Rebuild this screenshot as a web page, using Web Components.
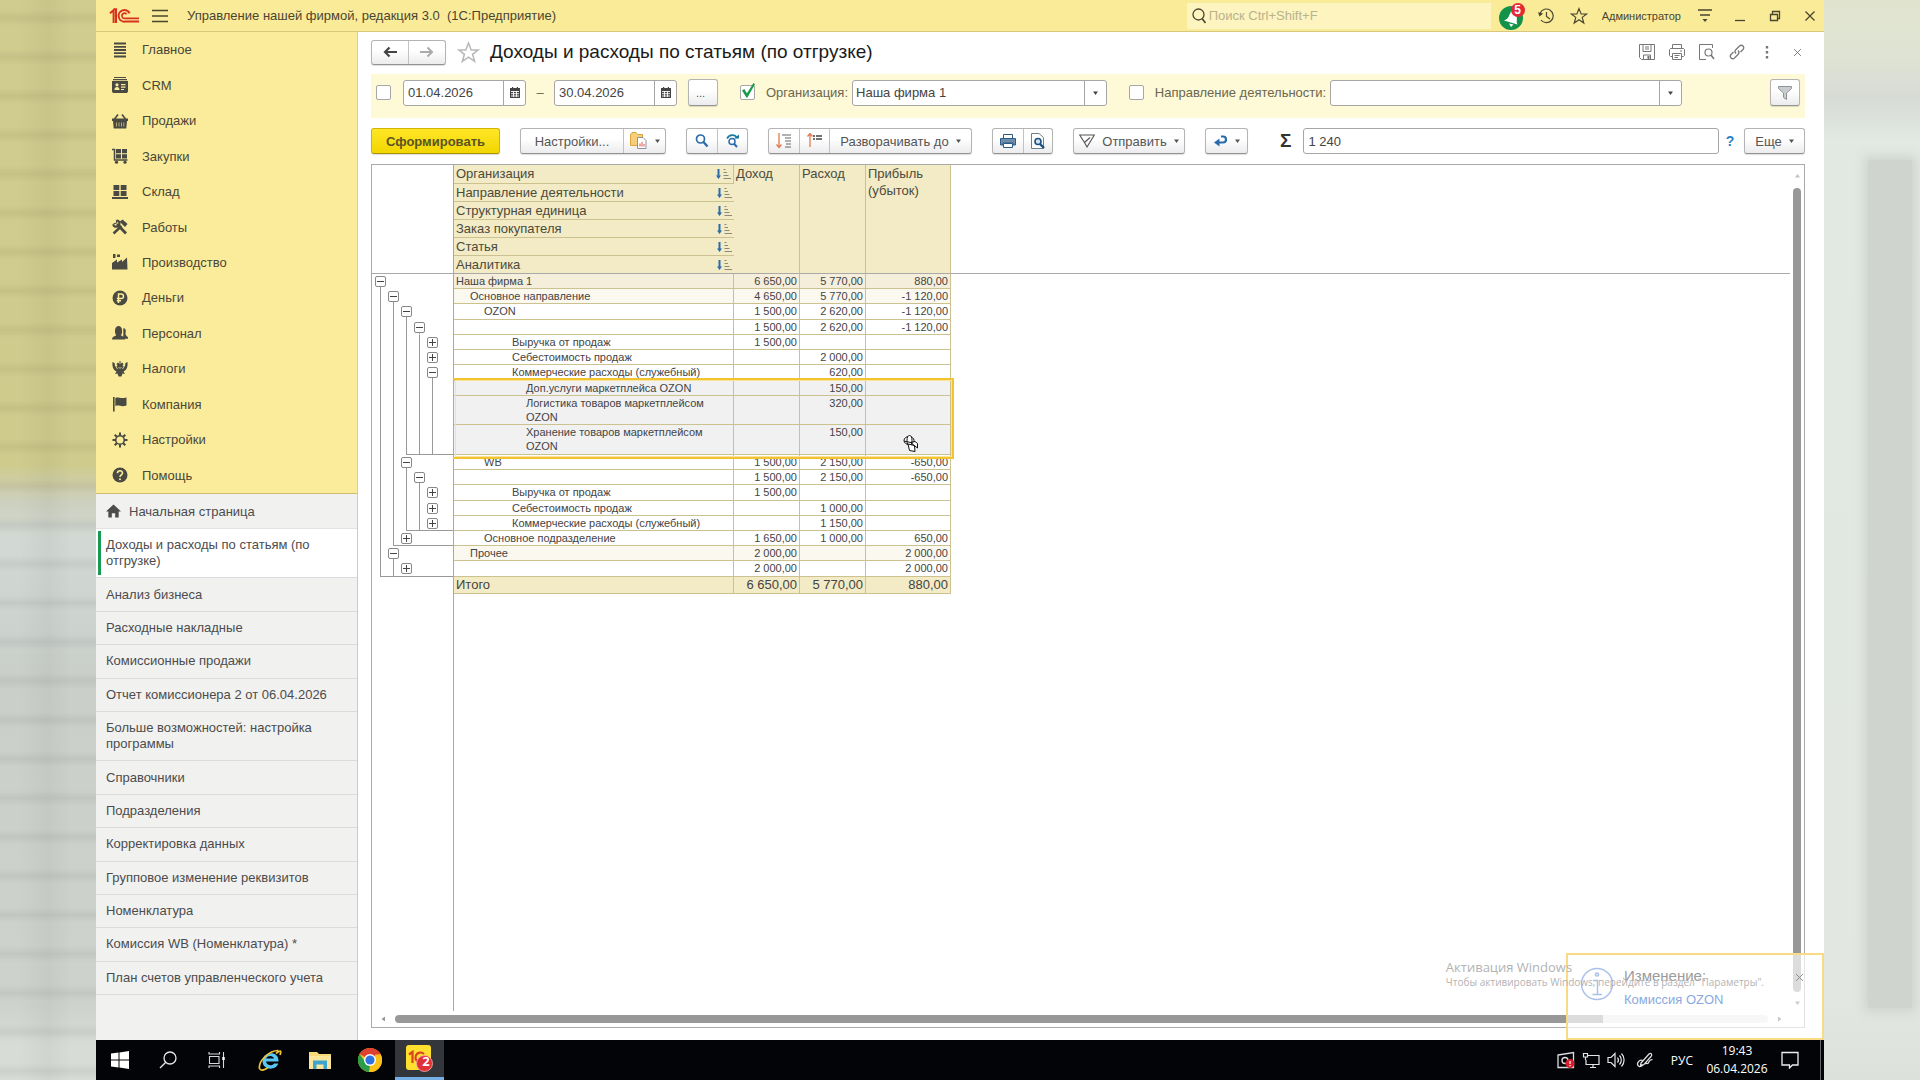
<!DOCTYPE html>
<html lang="ru">
<head>
<meta charset="utf-8">
<title>Доходы и расходы по статьям (по отгрузке)</title>
<style>
html,body{margin:0;height:100%}
body{font-family:"Liberation Sans",Arial,sans-serif;font-size:13px;color:#444;background:#dfe4de}
</style>
</head>
<body>
<ufm-desktop></ufm-desktop>
<script>
const define = (name, html, setup) => {
  const tpl = document.createElement('template');
  customElements.define(name, class extends HTMLElement {
    constructor() {
      super();
      this.attachShadow({mode: 'open'});
      tpl.innerHTML = tpl.innerHTML || html;
    }
    connectedCallback() {
      if (this.ready) return;
      this.ready = true;
      this.shadowRoot.append(document.importNode(tpl.content, true));
      if (setup) setup(this, this.shadowRoot);
    }
  });
};

/* ---------- icons: [viewBox, markup] ---------- */
const S = 'fill="none" stroke="currentColor"';
const ICONS = {
  logo: ['0 0 30 15', `<g fill="none" stroke="#d8321f" stroke-width="2"><path d="M1 5.2 4.6 2.2V15M7 15V1.2H4.4"/><path d="M20.6 5.2A5.8 5.8 0 1 0 16 13.6H30"/><path d="M17.6 6.2A2.6 2.6 0 1 0 16 10.4H30" stroke-width="1.6"/></g>`],
  burger: ['0 0 16 14', `<path ${S} d="M0 1.5H16M0 7H16M0 12.5H16" stroke-width="1.4"/>`],
  lens: ['0 0 16 16', `<circle cx="8.5" cy="6.5" r="5.500" ${S} stroke-width="1.3"/><path ${S} d="M12 10.500 15.500 15" stroke-width="1.6"/>`],
  bell: ['0 0 30 28', `<circle cx="13" cy="16" r="12" fill="#13924a"/><path d="M6 18.5C11 17 11 13 13.5 8.5L18.5 14C19.5 18 18 20 19.5 22.5ZM11 21.5 15.5 22.5 13 25Z" fill="#fff"/><circle cx="20" cy="8" r="7" fill="#e32a33"/>`],
  history: ['0 0 18 16', `<g ${S} stroke-width="1.2"><path d="M3.2 5A6.8 6.8 0 1 1 4 12M9.5 4V8.5L13 11"/></g><path d="M1 4.2 6.2 5.5 2.5 8.6Z" fill="currentColor"/>`],
  star: ['0 0 18 18', `<path ${S} stroke-width="1.2" d="M9 1.6 11.1 7H16.6L12.2 10.4 13.8 16 9 12.7 4.2 16 5.8 10.4 1.4 7H6.9Z"/>`],
  svc: ['0 0 14 16', `<path ${S} d="M0 2H14M2 7H12" stroke-width="1.5"/><path d="M4.5 11H9.5L7 14Z" fill="currentColor"/>`],
  min: ['0 0 12 12', `<path ${S} d="M1 10.5H11" stroke-width="1.3"/>`],
  restore: ['0 0 12 12', `<path ${S} d="M1.5 4.5H8.5V10.5H1.5ZM3.5 4.5V1.5H10.5V8.5H8.5" stroke-width="1.3"/>`],
  close: ['0 0 12 12', `<path ${S} d="M1.5 1.5 10.5 10.5M10.5 1.5 1.5 10.5" stroke-width="1.3"/>`],
  main: ['0 0 16 16', `<path ${S} d="M2 1.5H14M2 4.8H14M2 8H14M2 11.2H14M2 14.5H14" stroke-width="1.8"/>`],
  crm: ['0 0 16 16', `<path d="M2 0H14V1H2ZM1 2H15V3.2H1ZM0 4H16V14.5L15 16H1L0 14.5Z" fill="currentColor"/><g fill="#faec9b"><circle cx="5" cy="7.8" r="1.6"/><path d="M2.5 13C2.5 10.8 3.5 10 5 10S7.500 10.800 7.500 13ZM9 7H13.500V8.200H9ZM9 9.500H13.500V10.700H9ZM9 12H12V13H9Z"/></g>`],
  sales: ['0 0 16 16', `<path d="M0 5.500H16V8H15L14.300 15.500H1.700L1 8H0Z" fill="currentColor"/><path ${S} d="M2.500 6 6 1.500M13.500 6 10 1.500" stroke-width="1.600"/><path d="M4.500 9.500V13.500M7 9.500V13.500M9.500 9.500V13.500M11.800 9.500V13.500" stroke="#faec9b" stroke-width=".6" fill="none"/>`],
  buy: ['0 0 16 16', `<path ${S} d="M0 1.500H2.500V12H15.500" stroke-width="1.5"/><path d="M4 1H9V5.200H4ZM10 1H15V5.200H10ZM4 6.200H9V10.400H4ZM10 6.200H15V10.400H10Z" fill="currentColor"/><circle cx="4.500" cy="14.200" r="1.600" fill="currentColor"/><circle cx="13" cy="14.200" r="1.600" fill="currentColor"/>`],
  stock: ['0 0 16 16', `<path d="M1.500 1H7.300V6H1.500ZM8.700 1H14.500V6H8.700ZM1.500 7H7.300V12H1.500ZM8.700 7H14.500V12H8.700ZM0 13H16V15H0Z" fill="currentColor"/>`],
  works: ['0 0 16 16', `<path ${S} d="M5 5 14 14.500" stroke-width="2.800"/><path ${S} d="M4.300 0.800 4.800 4 1.500 4.800" stroke-width="1"/><path ${S} d="M5 1.500A3.200 3.200 0 1 1 1.200 5.200" stroke-width="2"/><path ${S} d="M1.500 14.500 9.500 7" stroke-width="2.400"/><path d="M7.500 2.500 11 0.500 12 2 13.500 3 15.500 5 13 8Z" fill="currentColor"/>`],
  prod: ['0 0 16 16', `<path d="M0 15.500V9L5 5.500V8.500L10 5.500V8L15 3.500 15.500 15.500ZM1 0H3.500V4H1ZM5 0.500H8V3H5Z" fill="currentColor"/>`],
  money: ['0 0 16 16', `<circle cx="8" cy="8" r="7.500" fill="currentColor"/><path d="M6.500 13V4H9.200A2.200 2.200 0 0 1 9.200 8.600H4.800M4.800 10.700H9" fill="none" stroke="#faec9b" stroke-width="1.500"/>`],
  staff: ['0 0 17 16', `<path d="M12 3C14.500 3 15 5 14.500 7.500 14 9 14.500 10.500 17 12.500V14H12Z" fill="currentColor"/><path d="M0 15C0 11.800 3.500 11.500 4.500 10.500 2.500 8 2.500 0.500 7 0.500S11.500 8 9.500 10.500C10.500 11.500 14 11.800 14 15Z" fill="currentColor"/>`],
  tax: ['0 0 16 16', `<path d="M8 3.200 6 1.500 4.500 3 5.500 5 3.500 5.500 2.500 2 0.500 1C0 5 1 9 4.500 10.500L3 13 5.500 12.500 6.500 15.500H9.500L10.500 12.500 13 13 11.500 10.500C15 9 16 5 15.500 1L13.500 2 12.500 5.500 10.500 5 11.500 3 10 1.500Z" fill="currentColor"/><path d="M8 0V3" stroke="currentColor"/><path d="M3 4 5.500 8M13 4 10.500 8M6.500 6 8 7.500 9.500 6" fill="none" stroke="#faec9b" stroke-width=".8"/>`],
  flag: ['0 0 16 16', `<path d="M1 1H2.600V15.500H1ZM3.300 2C6 0.500 8 3 14.500 1.500V9.500C9 11.500 7.500 8.500 3.300 10Z" fill="currentColor"/>`],
  gear: ['0 0 16 16', `<circle cx="8" cy="8" r="4.300" ${S} stroke-width="1.600"/><path ${S} stroke-width="2" d="M8 0.500V3.500M8 12.500V15.500M0.500 8H3.500M12.500 8H15.500M2.700 2.700 4.800 4.800M11.200 11.200 13.300 13.300M13.300 2.700 11.200 4.800M4.800 11.200 2.700 13.300"/>`],
  help: ['0 0 16 16', `<circle cx="8" cy="8" r="7.500" fill="currentColor"/><path d="M5.500 6.200C5.500 3 10.500 3 10.500 6 10.500 7.800 8 8 8 10" fill="none" stroke="#faec9b" stroke-width="1.600"/><circle cx="8" cy="12.200" r="1" fill="#faec9b"/>`],
  home: ['0 0 16 14', `<path d="M8 0 16 7.500H13.500V14H9.800V9.500H6.200V14H2.500V7.500H0Z" fill="currentColor"/>`],
  left: ['0 0 16 12', `<path ${S} d="M15 6H3M7.500 1.500 3 6 7.500 10.500" stroke-width="2.200"/>`],
  right: ['0 0 16 12', `<path ${S} d="M1 6H13M8.500 1.500 13 6 8.500 10.500" stroke-width="2"/>`],
  save: ['0 0 16 16', `<g ${S}><path d="M1 0.500H15.500V15.500H2.500L0.500 13.500V0.500ZM4 0.500V7.500H12V0.500M4.500 15.500V11H11.500V15.500M6 3H10M6 5H10"/></g><path d="M8.500 12H10.500V15H8.500Z" fill="currentColor"/>`],
  print: ['0 0 16 16', `<path ${S} d="M3.500 4V0.500H12.500V4M3 12.500H1.500L0.500 11.500V5.500L1.500 4.500H14.500L15.500 5.500V11.500L14.500 12.500H13M3.500 9.500H12.500V15.500H3.500ZM5.500 11.500H10.500M5.500 13.500H9M11 7H13"/>`],
  preview: ['0 0 16 16', `<path ${S} d="M5 15.500H0.500V0.500H13.500V4M5 15.500H7"/><circle cx="9.500" cy="8.500" r="3.500" ${S} stroke-width="1.200"/><path ${S} d="M12 11 15 15" stroke-width="1.600"/>`],
  link: ['0 0 16 16', `<path ${S} stroke-width="1.300" d="M7 9.500C5.500 8 6 6.500 7 5.500L10.500 2C13 0 16 3 14 5.500L11.500 8M9 6.500C10.500 8 10 9.500 9 10.500L5.500 14C3 16 0 13 2 10.500L4.500 8"/>`],
  dots: ['0 0 4 14', `<path d="M0.800 1H3.200V3.500H0.800ZM0.800 6H3.200V8.500H0.800ZM0.800 11H3.200V13.500H0.800Z" fill="currentColor"/>`],
  cal: ['0 0 10 11', `<path d="M0 1H10V11H0ZM2 0H3.200V2H2ZM6.800 0H8V2H6.800Z" fill="currentColor"/><path d="M1 4.500H9M1 6.700H9M1 9H9M3.500 4V10M6.500 4V10" stroke="#fff" stroke-width=".9"/>`],
  caret: ['0 0 5 4', `<path d="M0 0.500H5L2.500 4Z" fill="currentColor"/>`],
  funnel: ['0 0 14 14', `<path d="M0.500 0.500H13.500V2.500L8.500 7V13.500L5.500 11.500V7L0.500 2.500Z" fill="#c9cdd0" stroke="#8d9499"/>`],
  variants: ['0 0 18 18', `<path d="M0.500 13.500V2.500L2 0.500H6L7.500 2.500H12.500V13.500Z" fill="#f6cf7c" stroke="#dda33a"/><path d="M7.500 5.500H13L16 8.500V16.500H7.500Z" fill="#fff" stroke="#8a93a0"/><path d="M10 14.500V11.500M12 14.500V10M14 14.500V12" stroke="#d9534f"/>`],
  find: ['0 0 14 14', `<circle cx="5.500" cy="5" r="4" fill="none" stroke="#2a6cab" stroke-width="1.700"/><path d="M8.500 8 12.500 12.500" stroke="#2a6cab" stroke-width="2.300"/>`],
  findnext: ['0 0 14 14', `<circle cx="6" cy="7.500" r="3" fill="none" stroke="#2a6cab" stroke-width="1.500"/><path d="M8 9.800 11 13" stroke="#2a6cab" stroke-width="2"/><path d="M1 4.500C3.500 0 9 0 11 4" fill="none" stroke="#1a7aa0" stroke-width="1.700"/><path d="M8 4.500H13V0.500Z" fill="#1a7aa0"/>`],
  expand: ['0 0 16 16', `<path d="M3 0V14M0.500 11.500 3 14.500 5.500 11.500" fill="none" stroke="#e27a50" stroke-width="1.300"/><path d="M6 2H15M9 5H15M9 8H15M10 11H15M9 14H15" stroke="#666" stroke-width="1.200"/>`],
  collapse: ['0 0 16 16', `<path d="M3 14V1M0.500 3.500 3 0.500 5.500 3.500" fill="none" stroke="#e27a50" stroke-width="1.300"/><path d="M6 3H8M9 3H15M6 6H8M9 6H15" stroke="#444" stroke-width="1.500"/>`],
  printb: ['0 0 16 14', `<path d="M3.500 4V0.500H12.500V4" fill="#fff" stroke="#2b5a86"/><path d="M0.500 4.500H15.500V11H13V9H3V11H0.500Z" fill="#6f8ca8" stroke="#2b5f8f"/><path d="M3.500 9.500H12.500V13.500H3.500Z" fill="#fff" stroke="#2b5a86"/>`],
  previewb: ['0 0 14 16', `<path d="M0.500 0.500H8L12.500 4.500V15.500H0.500Z" fill="#fff" stroke="#6f7f8f"/><circle cx="7" cy="8.500" r="3" fill="#cfe4f5" stroke="#1c4f82" stroke-width="1.600"/><path d="M9 11 13 15" stroke="#1c4f82" stroke-width="2.400"/>`],
  send: ['0 0 16 14', `<path ${S} stroke-width="1.100" d="M0.700 1H15.300L8 13 5.500 8.500ZM5.500 8.500 11 3.500M2.500 4 5.500 8.500"/>`],
  undo: ['0 0 14 14', `<path d="M4 8.500H9A3 3 0 0 0 9 2.500H7" fill="none" stroke="#2a6cab" stroke-width="2.200"/><path d="M0 8.500 5.500 4.500V12.500Z" fill="#2a6cab"/>`],
  sort: ['0 0 16 12', `<path d="M2.500 1H4.500V7.500H6L3.500 11 1 7.500H2.500Z" fill="#2a6cab"/><path d="M8.500 1.500H10.500M8.500 4.500H12M8.500 7.500H13.500M8.500 10.500H16" stroke="#8c8a76" stroke-width="1.200"/>`],
  cursor: ['0 0 18 18', `<g fill="#fff" stroke="#111"><ellipse cx="6" cy="5.500" rx="5" ry="4"/><ellipse cx="6.500" cy="5.500" rx="2.500" ry="5"/><path d="M1 6 10 8M7.500 7.500 12 6.500 14.500 8.500 14.500 13 12 11ZM5 9 11.500 10.500 12 16.500 6.500 15.500Z"/></g>`],
  win: ['0 0 18 18', `<path fill="#fff" d="M0 2.600 7.500 1.500V8.500H0ZM8.500 1.400 18 0V8.500H8.500ZM0 9.500H7.500V16.500L0 15.400ZM8.500 9.500H18V18L8.500 16.600Z"/>`],
  tsearch: ['0 0 18 18', `<circle cx="11" cy="7" r="6" fill="none" stroke="#e8e8e8" stroke-width="1.300"/><path d="M6.800 11.200 1 17" stroke="#e8e8e8" stroke-width="1.300"/>`],
  tview: ['0 0 18 18', `<path fill="none" stroke="#d8d8d8" stroke-width="1.100" d="M1 1V3H11.500V1M1.500 5.500H11V12.500H1.500ZM1 17V15H11.500V17M15.500 1V17"/><path d="M14.300 6H16.700V9H14.300Z" fill="#fff"/>`],
  ie: ['0 0 24 24', `<path d="M20.500 13.500H8C8.300 17.500 14.500 18.500 16 15.500H20.200C18 23 4.500 22.500 4.500 13 4.500 3.500 21 2 20.500 13.500ZM8.200 10.500H16C15.500 7 8.800 7 8.200 10.500Z" fill="#5ac8f5"/><path d="M18 5.500C22 2 24 2 22 7M20.500 2.500C12 2 0 13 1.500 20.500 3 24 8 21 10 19.500" fill="none" stroke="#f2c230" stroke-width="1.700"/>`],
  folder: ['0 0 24 20', `<path d="M1 2H9L11 4H23V19H1Z" fill="#f8d878"/><path d="M1 6H23V19H1Z" fill="#fbe59a"/><path d="M5 19V10.500H19V19H15.500V14.500H8.500V19Z" fill="#3ba5d0"/>`],
  chrome: ['0 0 24 24', `<circle cx="12" cy="12" r="12" fill="#fbc116"/><path d="M12 12 1.600 6A12 12 0 0 1 22.400 6Z" fill="#df4031"/><path d="M1.600 6 8 15 12 17.500 11 24A12 12 0 0 1 1.600 6Z" fill="#2a9d4b"/><path d="M11 24 16.500 13.500 17.200 6.500H22.700A12 12 0 0 1 11 24Z" fill="#fbc116"/><circle cx="12" cy="12" r="6" fill="#fff"/><circle cx="12" cy="12" r="4.600" fill="#2f72e2"/>`],
  onec: ['0 0 28 28', `<rect x="0" y="0" width="25" height="25" rx="3" fill="#ffe02e"/><g fill="none" stroke="#d9431f" stroke-width="2.200"><path d="M3 9.500 6.500 7V18"/><path d="M18 9A5 5 0 1 0 14 17.500H20"/></g><circle cx="18.500" cy="18.500" r="8" fill="#e0313a" stroke="#f6b0b0" stroke-width=".8"/>`],
  shield: ['0 0 18 18', `<path d="M1 4 16.500 1.500V16.500H1Z" fill="none" stroke="#ddd" stroke-width="1.300"/><circle cx="8" cy="9.500" r="3" fill="none" stroke="#ddd" stroke-width="1.400"/><circle cx="13" cy="12.500" r="4.500" fill="#d6202c"/><path d="M13 10V13M13 14V15.200" stroke="#fff" stroke-width="1.200"/>`],
  net: ['0 0 18 18', `<path d="M5 4.500H17V13.500H4V9M8 16.500H14M11 13.500V16.500M1.500 2.500H5.500V6H1.500ZM3.500 6V9" fill="none" stroke="#e4e4e4" stroke-width="1.200"/>`],
  vol: ['0 0 18 18', `<path d="M1 6.500H4L8 2.500V15.500L4 11.500H1ZM10.500 6.500A4 4 0 0 1 10.500 11.500M12.500 4.500A6.500 6.500 0 0 1 12.500 13.500M14.500 2.500A9.500 9.500 0 0 1 14.500 15.500" fill="none" stroke="#e4e4e4" stroke-width="1.200"/>`],
  pen: ['0 0 18 18', `<path d="M5 12 13 3C15 1.500 16.500 3.500 15 5.500L8 13.500 4.500 14ZM7 9.500C2 8 0 14 3 15.500 6 16.500 8 12 11 12.500 14 13 11 9 16.500 8.500" fill="none" stroke="#e4e4e4" stroke-width="1.200"/>`],
  note: ['0 0 18 18', `<path d="M1 1.500H17V14H11.500L8.500 17V14H1Z" fill="none" stroke="#eee" stroke-width="1.300"/>`],
  info: ['0 0 34 34', `<g fill="none" stroke="#a9c1ea" stroke-width="1.500"><circle cx="17" cy="17" r="15.500"/><circle cx="17" cy="7.500" r="1.600"/><path d="M13 13.500H17.500V27M12.500 27.500H22"/></g>`]
};
customElements.define('ufm-icon', class extends HTMLElement {
  constructor() { super(); this.attachShadow({mode: 'open'}); }
  connectedCallback() {
    const [box, art] = ICONS[this.getAttribute('name')];
    const [, , w, h] = box.split(' ');
    this.shadowRoot.innerHTML = `<style>:host{display:inline-flex;flex:none;width:${w}px;height:${h}px}svg{width:100%;height:100%}</style><svg viewBox="${box}" aria-hidden="true">${art}</svg>`;
  }
});

/* ---------- shared styles ---------- */
const BASE = `*{box-sizing:border-box}button,input,select{font:inherit;color:inherit;margin:0}a{color:inherit;text-decoration:none}
.plain{border:0;background:none;padding:0;display:inline-flex;align-items:center;justify-content:center}`;

/* Group of raised buttons sharing one frame */
define('ufm-button-group', `<style>${BASE}
:host{display:flex;height:26px;border:1px solid #b4b4b4;border-bottom-color:#939393;border-radius:3px;background:linear-gradient(#fff 40%,#ececee);box-shadow:0 1px 1px #0002;color:#555}
:host([tone=accent]){background:linear-gradient(#ffe626,#f2d600);border-color:#d0b400;border-bottom-color:#a89200;color:#5b5326;font-weight:bold}
::slotted(button){font:inherit;color:inherit;background:none;border:0;border-left:1px solid #c2c2c2;margin:0;padding:0 7px;display:flex;align-items:center;justify-content:center;gap:7px;white-space:nowrap}
::slotted(button:first-child){border-left:0}
</style><slot></slot>`);

/* Framed field with an optional button at its right end */
define('ufm-field', `<style>${BASE}
:host{display:flex;height:26px;border:1px solid #a6a6a6;border-radius:3px;background:#fff;color:#444;overflow:hidden}
::slotted(input),::slotted(select){flex:1;min-width:0;width:100%;border:0;outline:0;background:none;padding:0 4px;margin:0;font:inherit;color:inherit;appearance:none}
::slotted(select){padding:0 3px}
::slotted(button){flex:none;width:22px;border:0;border-left:1px solid #a6a6a6;background:none;padding:0;margin:0;color:#555;display:flex;align-items:center;justify-content:center}
</style><slot></slot>`);

define('ufm-titlebar', `<style>${BASE}
:host{display:flex;align-items:center;height:32px;padding:0 8px 0 13px;background:#faeb99;border-bottom:1px solid #d8c87c;color:#4a4530}
.title{margin:0 auto 0 19px;font-size:13px;white-space:pre}
.burger{margin-left:13px}
label{display:flex;align-items:center;gap:3px;width:304px;height:26px;padding:0 3px;background:#fdf4c0;color:#4a4530}
label input{border:0;background:none;outline:0;padding:0;width:270px}
label input::placeholder{color:#b9b28c}
.bell{position:relative;margin:0 9px 0 7px}
.bell b{position:absolute;left:15px;top:1px;width:10px;text-align:center;color:#fff;font-size:12px;line-height:14px}
.user{font-size:11px;margin:0 17px 0 14px}
.win{gap:23px;display:flex;margin-left:22px}
</style>
<ufm-icon name="logo"></ufm-icon>
<button class="plain burger" aria-label="Меню"><ufm-icon name="burger"></ufm-icon></button>
<span class="title">Управление нашей фирмой, редакция 3.0  (1С:Предприятие)</span>
<label><ufm-icon name="lens"></ufm-icon><input type="search" placeholder="Поиск Ctrl+Shift+F" aria-label="Поиск"></label>
<button class="plain bell" aria-label="Уведомления"><ufm-icon name="bell"></ufm-icon><b>5</b></button>
<button class="plain" aria-label="История"><ufm-icon name="history"></ufm-icon></button>
<button class="plain" aria-label="Избранное" style="margin-left:15px"><ufm-icon name="star"></ufm-icon></button>
<span class="user">Администратор</span>
<button class="plain" aria-label="Сервис"><ufm-icon name="svc"></ufm-icon></button>
<span class="win">
<button class="plain" aria-label="Свернуть"><ufm-icon name="min"></ufm-icon></button>
<button class="plain" aria-label="Восстановить"><ufm-icon name="restore"></ufm-icon></button>
<button class="plain" aria-label="Закрыть"><ufm-icon name="close"></ufm-icon></button></span>`);

define('ufm-sections', `<style>${BASE}
:host{display:block;background:#faec9b;border-bottom:1px solid #cdbb70}
nav{display:grid;grid-auto-rows:1fr;height:461px}
a{display:flex;align-items:center;padding-left:16px;color:#4a4638}
ufm-icon{width:16px;height:16px;margin-right:14px;color:#4b4a42}
</style><nav></nav>`, (el, root) => {
  const items = [['main','Главное'],['crm','CRM'],['sales','Продажи'],['buy','Закупки'],['stock','Склад'],['works','Работы'],['prod','Производство'],['money','Деньги'],['staff','Персонал'],['tax','Налоги'],['flag','Компания'],['gear','Настройки'],['help','Помощь']];
  root.querySelector('nav').innerHTML = items.map(([i, t]) => `<a href="#${i}"><ufm-icon name="${i}"></ufm-icon>${t}</a>`).join('');
});

define('ufm-open-tabs', `<style>${BASE}
:host{display:block;flex:1;background:#f1f1f0;color:#4c4c4c}
.home{display:flex;align-items:center;gap:8px;height:35px;padding-left:10px;border-bottom:1px solid #e2e2e2}
nav{display:flex;flex-direction:column;height:466px}
nav a{display:flex;flex:1 1 auto;align-items:center;padding:8px 24px 8px 10px;line-height:16px;border-bottom:1px solid #d9dcdc}
nav a[aria-current]{background:linear-gradient(#189a52,#189a52) 2px 50%/3px calc(100% - 4px) no-repeat #fff}
</style><a class="home" href="#home"><ufm-icon name="home" style="width:15px"></ufm-icon>Начальная страница</a><nav></nav>`, (el, root) => {
  const tabs = ['Доходы и расходы по статьям (по отгрузке)','Анализ бизнеса','Расходные накладные','Комиссионные продажи','Отчет комиссионера 2 от 06.04.2026','Больше возможностей: настройка программы','Справочники','Подразделения','Корректировка данных','Групповое изменение реквизитов','Номенклатура','Комиссия WB (Номенклатура) *','План счетов управленческого учета'];
  root.querySelector('nav').innerHTML = tabs.map((t, i) => `<a href="#tab${i}"${i ? '' : ' aria-current="page"'}>${t}</a>`).join('');
});

define('ufm-form-head', `<style>${BASE}
:host{display:flex;align-items:center;height:42px;padding-bottom:2px}
ufm-button-group{height:25px}
.fav{margin:0 10px 0 11px;color:#b9b9b9}
.fav ufm-icon{width:23px;height:23px}
h1{margin:0 auto 0 0;font-size:19px;font-weight:normal;color:#1a1a1a;line-height:24px}
.tools{display:flex;align-items:center;gap:14px;color:#777}
.tools button{width:16px}
</style>
<ufm-button-group><button aria-label="Назад" style="padding:0 10px;color:#444"><ufm-icon name="left"></ufm-icon></button><button aria-label="Вперед" style="padding:0 10px;color:#aaa"><ufm-icon name="right"></ufm-icon></button></ufm-button-group>
<button class="plain fav" aria-label="В избранное"><ufm-icon name="star"></ufm-icon></button>
<h1>Доходы и расходы по статьям (по отгрузке)</h1>
<div class="tools">
<button class="plain" aria-label="Сохранить"><ufm-icon name="save"></ufm-icon></button>
<button class="plain" aria-label="Печать"><ufm-icon name="print"></ufm-icon></button>
<button class="plain" aria-label="Просмотр"><ufm-icon name="preview"></ufm-icon></button>
<button class="plain" aria-label="Ссылка"><ufm-icon name="link"></ufm-icon></button>
<button class="plain" aria-label="Дополнительно"><ufm-icon name="dots"></ufm-icon></button>
<button class="plain" aria-label="Закрыть"><ufm-icon name="close" style="width:9px;height:9px"></ufm-icon></button></div>`);

define('ufm-filter-bar', `<style>${BASE}
:host{display:flex;align-items:center;height:44px;padding:0 5px 7px;background:#fef9d7;color:#6b6750}
input[type=checkbox]{appearance:none;flex:none;position:relative;width:15px;height:15px;border:1px solid #a6a6a6;border-radius:2px;background:#fff}
input[type=checkbox]:checked::before{content:"";position:absolute;left:1px;top:-3px;width:13px;height:15px;background:#1d9a4b;clip-path:polygon(0 50%,18% 40%,38% 68%,88% 0,100% 8%,42% 96%,34% 96%)}
.date{width:123px;margin-left:12px}
.dash{width:28px;text-align:center}
.dash+.date{margin-left:0}
.period{margin:0 22px 0 11px;height:27px;width:30px;font-size:11px}
label{white-space:nowrap}
.org{flex:254 1 0}.dir{flex:352 1 0}.rest{flex:88 1 0}
</style>
<input type="checkbox" aria-label="Период">
<ufm-field class="date"><input type="text" value="01.04.2026" aria-label="Начало периода"><button aria-label="Календарь"><ufm-icon name="cal"></ufm-icon></button></ufm-field>
<span class="dash">–</span>
<ufm-field class="date"><input type="text" value="30.04.2026" aria-label="Конец периода"><button aria-label="Календарь"><ufm-icon name="cal"></ufm-icon></button></ufm-field>
<ufm-button-group class="period"><button aria-label="Выбрать период">...</button></ufm-button-group>
<input type="checkbox" checked aria-label="Отбор по организации">
<label for="org" style="margin:0 4px 0 11px">Организация:</label>
<ufm-field class="org"><select id="org"><option>Наша фирма 1</option></select><button aria-label="Выбрать"><ufm-icon name="caret"></ufm-icon></button></ufm-field>
<input type="checkbox" aria-label="Отбор по направлению" style="margin-left:22px">
<label for="dir" style="margin:0 4px 0 11px">Направление деятельности:</label>
<ufm-field class="dir"><select id="dir"><option></option></select><button aria-label="Выбрать"><ufm-icon name="caret"></ufm-icon></button></ufm-field>
<span class="rest"></span>
<ufm-button-group style="height:27px"><button aria-label="Отборы"><ufm-icon name="funnel"></ufm-icon></button></ufm-button-group>`);

define('ufm-command-bar', `<style>${BASE}
:host{display:flex;align-items:center;height:46px}
ufm-button-group{margin-right:20px}
.sigma{font-size:19px;font-weight:bold;color:#333;margin:0 12px}
ufm-field{flex:1}
.q{color:#2f7fc4;font-size:14px;width:22px;margin-right:3px;font-weight:bold}
</style>
<ufm-button-group tone="accent" style="width:129px"><button style="flex:1">Сформировать</button></ufm-button-group>
<ufm-button-group><button style="width:102px">Настройки...</button><button aria-label="Варианты" style="width:42px;padding:0 5px"><ufm-icon name="variants"></ufm-icon><ufm-icon name="caret"></ufm-icon></button></ufm-button-group>
<ufm-button-group><button aria-label="Найти" style="width:30px"><ufm-icon name="find"></ufm-icon></button><button aria-label="Найти далее" style="width:30px"><ufm-icon name="findnext"></ufm-icon></button></ufm-button-group>
<ufm-button-group><button aria-label="Развернуть" style="width:30px"><ufm-icon name="expand"></ufm-icon></button><button aria-label="Свернуть" style="width:30px"><ufm-icon name="collapse"></ufm-icon></button><button style="width:142px">Разворачивать до <ufm-icon name="caret"></ufm-icon></button></ufm-button-group>
<ufm-button-group><button aria-label="Печать" style="width:30px"><ufm-icon name="printb"></ufm-icon></button><button aria-label="Предпросмотр" style="width:29px"><ufm-icon name="previewb"></ufm-icon></button></ufm-button-group>
<ufm-button-group><button style="width:110px"><ufm-icon name="send"></ufm-icon>Отправить<ufm-icon name="caret"></ufm-icon></button></ufm-button-group>
<ufm-button-group><button aria-label="Вернуть" style="width:41px"><ufm-icon name="undo"></ufm-icon><ufm-icon name="caret"></ufm-icon></button></ufm-button-group>
<span class="sigma">Σ</span>
<ufm-field><input type="text" value="1 240" aria-label="Сумма"></ufm-field>
<button class="plain q">?</button>
<ufm-button-group style="margin:0"><button style="width:59px">Еще <ufm-icon name="caret"></ufm-icon></button></ufm-button-group>`);

define('ufm-report', `<style>${BASE}
:host{display:flex;flex-direction:column;flex:1;min-height:0;margin-bottom:12px;border:1px solid #a9a9a9;background:#fff}
.body{display:flex;flex:1;min-height:0}
.sheet{display:flex;flex-direction:column;flex:1;min-width:0}
.below{flex:1;width:82px;border-right:1px solid #a9a9a9}
table{table-layout:fixed;width:100%;height:429px;border-collapse:separate;border-spacing:0;color:#444;font-size:11px;line-height:14px}
th,td{padding:0 2px;border:0 solid #cbc28f;border-width:0 1px 1px 0;text-align:left;vertical-align:top;font-weight:normal}
th{background:#f2ebc5;font-size:13px;line-height:17px;color:#4c4a3c}
thead tr{height:18px}
thead tr:first-child{height:19px}
tr>:last-child{border-right:0}
tbody tr>:last-child{border:0;background:none}
th.blank,td.blank{background:#fff}
thead .edge{border-bottom-color:#a9a9a9}
.k{display:flex;justify-content:space-between;align-items:center}
.n{text-align:right}
td.tree{padding:0;border-right-color:#a9a9a9;border-bottom:0}
td.tree button{display:block;position:relative;width:11px;height:11px;margin-top:2px;padding:0;border:1px solid #888;border-radius:2px;background:linear-gradient(#444,#444) 50%/7px 1px no-repeat #fff}
td.tree button.plus{background:linear-gradient(#444,#444) 50%/7px 1px no-repeat,linear-gradient(#444,#444) 50%/1px 7px no-repeat #fff}
.r0 .d{background:#f5eedb}.r1 .d{background:#fbf8f0}
.sum td{font-size:13px;line-height:16px}.sum .d{background:#f2ebc5}
.sel .d{background:#f1f1f2}
tbody.sel{position:relative}
tbody.sel::after{content:"";position:absolute;left:81px;top:-3px;width:499px;height:calc(100% + 3px);border:2px solid #f2c32f;border-left-width:0;outline:1px solid #fbe49a;outline-offset:-3px}
.cursor{position:absolute;left:531px;bottom:2px}
.v{display:flex;flex-direction:column;align-items:center;width:14px;padding:9px 0 6px;color:#666}
.v i{flex:1;width:8px;margin:10px 0 9px;border-radius:4px;background:#989898}
.h{display:flex;align-items:center;height:16px;padding:0 22px 0 9px;color:#555}
.h i{flex:1;height:8px;margin:0 9px;border-radius:4px;background:linear-gradient(90deg,#989898 88%,#e6e6e6 88%)}
</style>
<div class="body"><div class="sheet"><table><colgroup><col style="width:82px"><col style="width:280px"><col style="width:66px"><col style="width:66px"><col style="width:85px"><col></colgroup><thead></thead></table><div class="below"></div></div>
<div class="v"><ufm-icon name="caret" style="transform:rotate(180deg);opacity:.4"></ufm-icon><i></i><ufm-icon name="caret"></ufm-icon></div></div>
<div class="h"><ufm-icon name="caret" style="transform:rotate(90deg);opacity:.6"></ufm-icon><i></i><ufm-icon name="caret" style="transform:rotate(-90deg)"></ufm-icon></div>`, (el, root) => {
  const keys = ['Организация','Направление деятельности','Структурная единица','Заказ покупателя','Статья','Аналитика'];
  root.querySelector('thead').innerHTML = keys.map((k, i) => '<tr>' +
    (i ? '' : '<td class="tree edge" rowspan="6" style="border-bottom:1px solid #a9a9a9"></td>') +
    `<th${i === 5 ? ' class="edge"' : ''}><div class="k">${k}<ufm-icon name="sort"></ufm-icon></div></th>` +
    (i ? '' : '<th class="edge" rowspan="6">Доход</th><th class="edge" rowspan="6">Расход</th><th class="edge" rowspan="6">Прибыль (убыток)</th><td class="blank edge" rowspan="6"></td>') + '</tr>').join('');
  /* level, text, income, expense, profit, box level, box sign, running line levels, level closed under the row */
  const rows = [
    [0,'Наша фирма 1','6 650,00','5 770,00','880,00',0,'-',[]],
    [1,'Основное направление','4 650,00','5 770,00','-1 120,00',1,'-',[0]],
    [2,'OZON','1 500,00','2 620,00','-1 120,00',2,'-',[0,1]],
    [3,'','1 500,00','2 620,00','-1 120,00',3,'-',[0,1,2]],
    [4,'Выручка от продаж','1 500,00','','',4,'+',[0,1,2,3]],
    [4,'Себестоимость продаж','','2 000,00','',4,'+',[0,1,2,3]],
    [4,'Коммерческие расходы (служебный)','','620,00','',4,'-',[0,1,2,3]],
    [5,'Доп.услуги маркетплейса OZON','','150,00','',-1,'',[0,1,2,3,4]],
    [5,'Логистика товаров маркетплейсом OZON','','320,00','',-1,'',[0,1,2,3,4]],
    [5,'Хранение товаров маркетплейсом OZON','','150,00','',-1,'',[0,1,2,3,4],2],
    [2,'WB','1 500,00','2 150,00','-650,00',2,'-',[0,1]],
    [3,'','1 500,00','2 150,00','-650,00',3,'-',[0,1,2]],
    [4,'Выручка от продаж','1 500,00','','',4,'+',[0,1,2,3]],
    [4,'Себестоимость продаж','','1 000,00','',4,'+',[0,1,2,3]],
    [4,'Коммерческие расходы (служебный)','','1 150,00','',4,'+',[0,1,2,3],2],
    [2,'Основное подразделение','1 650,00','1 000,00','650,00',2,'+',[0,1],1],
    [1,'Прочее','2 000,00','','2 000,00',1,'-',[0]],
    [2,'','2 000,00','','2 000,00',2,'+',[0,1],0],
    [0,'Итого','6 650,00','5 770,00','880,00',-1,'',[]]
  ];
  const ink = 'linear-gradient(#999,#999) no-repeat ';
  const html = rows.map(([lv, text, a, b, c, box, sign, lines, close], i) => {
    const bg = lines.map(l => `${ink}${8 + 13 * l}px 0/1px 100%`);
    if (sign === '-') bg.push(`${ink}${8 + 13 * box}px 100%/1px 50%`);
    if (close !== undefined) bg.push(`${ink}100% 100%/${73 - 13 * close}px 1px`);
    const btn = box < 0 ? '' : `<button class="${sign === '+' ? 'plus' : 'minus'}" aria-label="${sign === '+' ? 'Развернуть' : 'Свернуть'}" style="margin-left:${3 + 13 * box}px"></button>`;
    return `<tr class="r${lv}${i === 18 ? ' sum' : ''}"><td class="tree" style="background:${bg.join(',') || 'none'}">${btn}</td><td class="d" style="padding-left:${2 + 14 * lv}px">${text}</td><td class="d n">${a}</td><td class="d n">${b}</td><td class="d n">${c}</td><td>${i === 9 ? '<ufm-icon class="cursor" name="cursor"></ufm-icon>' : ''}</td></tr>`;
  });
  root.querySelector('table').insertAdjacentHTML('beforeend',
    `<tbody>${html.slice(0, 7).join('')}</tbody><tbody class="sel">${html.slice(7, 10).join('')}</tbody><tbody>${html.slice(10).join('')}</tbody>`);
});

define('ufm-notice', `<style>${BASE}
:host{display:flex;gap:10px;width:258px;height:87px;padding:12px 12px 0;border:2px solid #fadb85;background:#ffffffa8}
.t{flex:1;display:flex;flex-direction:column;gap:6px;font-size:15px;line-height:18px;color:#9b9b9b}
a{font-size:13px;color:#8aa9e0}
button{align-self:flex-start;margin:6px 6px 0 0;color:#8a8a8a}
ufm-icon[name=info]{width:34px;height:34px}
</style><ufm-icon name="info"></ufm-icon><div class="t"><span>Изменение:</span><a href="#ozon">Комиссия OZON</a></div><button class="plain" aria-label="Закрыть"><ufm-icon name="close" style="width:9px;height:9px"></ufm-icon></button>`);

define('ufm-watermark', `<style>:host{display:block;font-family:"Open Sans","Noto Sans",sans-serif;color:#b3b3b3;font-size:10px;line-height:13px;white-space:nowrap}b{display:block;font-weight:normal;font-size:13px;line-height:18px}</style><b>Активация Windows</b>Чтобы активировать Windows, перейдите в раздел "Параметры".`);

define('ufm-taskbar', `<style>${BASE}
:host{display:flex;height:40px;background:#020407;color:#fff;font-family:"Open Sans","Noto Sans",sans-serif;font-size:12px}
.apps{display:flex;margin-right:auto}
.apps button{width:48px;height:40px}
.apps .wide{width:50px}
.apps .on{position:relative;width:49px;background:#33363b;border-bottom:3px solid #76aee6}
.on b{position:absolute;left:26px;top:12px;width:10px;line-height:18px;font-size:13px}
.tray{display:flex;align-items:center;gap:7px}
.clock{width:74px;line-height:18px;text-align:center}
.show{width:4px;height:40px;border-left:1px solid #666;margin-left:14px}
</style><div class="apps">
<button class="plain" aria-label="Пуск"><ufm-icon name="win"></ufm-icon></button>
<button class="plain" aria-label="Поиск"><ufm-icon name="tsearch"></ufm-icon></button>
<button class="plain wide" aria-label="Представление задач" style="margin-right:3px"><ufm-icon name="tview"></ufm-icon></button>
<button class="plain wide" aria-label="Internet Explorer"><ufm-icon name="ie"></ufm-icon></button>
<button class="plain wide" aria-label="Проводник"><ufm-icon name="folder"></ufm-icon></button>
<button class="plain wide" aria-label="Chrome"><ufm-icon name="chrome"></ufm-icon></button>
<button class="plain on" aria-label="1С:Предприятие"><ufm-icon name="onec"></ufm-icon><b>2</b></button></div>
<div class="tray"><ufm-icon name="shield"></ufm-icon><ufm-icon name="net"></ufm-icon><ufm-icon name="vol"></ufm-icon><ufm-icon name="pen" style="margin:0 10px 0 4px"></ufm-icon><span>РУС</span><span class="clock">19:43<br>06.04.2026</span><ufm-icon name="note"></ufm-icon><span class="show"></span></div>`);

define('ufm-desktop', `<style>${BASE}
:host{display:grid;grid-template-columns:5fr 90fr 5fr;min-height:100vh;overflow:hidden}
.l{background:linear-gradient(90deg,#0000 20%,#00000009 50%,#0000 75%),repeating-linear-gradient(#0000 0,#0000 10px,#0000000d 18px,#0000 26px,#0000 39px),linear-gradient(#d0cb8e 0,#cfcb8d 43%,#cdd0be 46.5%,#d2d9d5 50%,#cacfca 62%,#cdd2cd 93%,#d7dcd6 97%)}
.r{padding:160px 8px 72px 44px;background:linear-gradient(#e0e4cf 0,#dfe3d3 5%,#d7dbd5 9%,#e2e8e2 13%,#e2e7e1 92%,#dce1dc)}
.r div{height:100%;background:#cfd4ce;box-shadow:0 0 10px 4px #cfd4ce}
.app{position:relative;display:flex;flex-direction:column;min-width:0;background:#fff}
.work{display:flex;flex:1;min-height:0}
aside{display:flex;flex-direction:column;width:262px;border-right:1px solid #dccb96}
main{display:flex;flex-direction:column;flex:1;min-width:0;padding:0 19px 0 13px}
ufm-notice{position:absolute;right:0;bottom:40px}
ufm-watermark{position:absolute;right:60px;bottom:91px}
</style>
<div class="l"></div>
<div class="app"><ufm-titlebar></ufm-titlebar>
<div class="work"><aside><ufm-sections></ufm-sections><ufm-open-tabs></ufm-open-tabs></aside>
<main><ufm-form-head></ufm-form-head><ufm-filter-bar></ufm-filter-bar><ufm-command-bar></ufm-command-bar><ufm-report></ufm-report></main></div>
<ufm-taskbar></ufm-taskbar><ufm-notice></ufm-notice><ufm-watermark></ufm-watermark></div>
<div class="r"><div></div></div>`);
</script>
</body>
</html>
